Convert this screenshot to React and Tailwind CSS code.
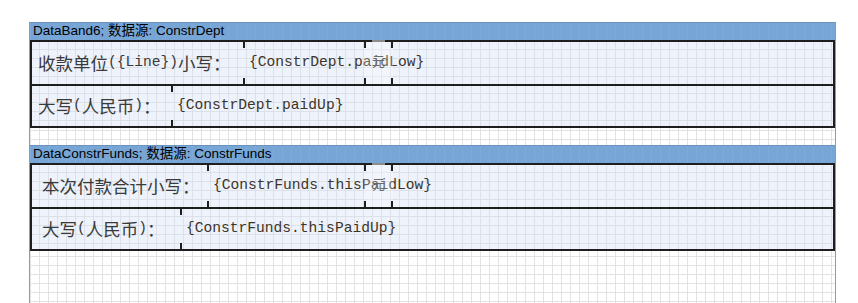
const pageGrid =
  'bg-white bg-[image:linear-gradient(to_right,#e3e3e3_1px,transparent_1px),linear-gradient(to_bottom,#e3e3e3_1px,transparent_1px)] bg-[size:9px_9px]';
const rowGrid =
  'bg-[#eef2fa] bg-[image:linear-gradient(to_right,#dbe0e9_1px,transparent_1px),linear-gradient(to_bottom,#dbe0e9_1px,transparent_1px)] bg-[size:9px_9px] bg-[position:-2px_-2px]';
const headGrid =
  'bg-[#77a6d6] bg-[image:linear-gradient(to_right,#7dabd9_1px,transparent_1px)] bg-[size:9px_9px]';

const cjk = { fontFamily: '"Noto Sans CJK SC", sans-serif' };
const mono = { fontFamily: '"Liberation Mono", "Noto Sans CJK SC", monospace' };

function Tick() {
  return (
    <div className="flex w-[2px] shrink-0 flex-col justify-between self-stretch">
      <div className="h-[6px] bg-[#1e1e1e]" />
      <div className="h-[6px] bg-[#1e1e1e]" />
    </div>
  );
}

// label made of CJK and half-width parts, like the designer's SimSun text
function Label({ parts, width, pad }) {
  return (
    <div className={`flex shrink-0 items-center whitespace-nowrap text-[#3a3a3a] ${width} ${pad}`}>
      {parts.map((p, i) =>
        p.m ? (
          <span key={i} className="text-[14.6px]" style={mono}>{p.t}</span>
        ) : (
          <span key={i} className="text-[17.5px] leading-none" style={cjk}>{p.t}</span>
        )
      )}
    </div>
  );
}

function YuanBox({ left }) {
  return (
    <div className={`absolute top-0 bottom-0 flex w-[29px] justify-between bg-white/25 ${left}`}>
      <Tick />
      <div className="flex flex-col items-center">
        <div className="-mt-[2px] h-[2px] w-[13px] bg-[#8c8c8c]" />
        <span className="mt-[12px] text-[13px] leading-none text-[#6a6a6a]" style={cjk}>元</span>
      </div>
      <Tick />
    </div>
  );
}

function Row({ label, labelW, pad, code, yuan, top }) {
  return (
    <div className={`relative flex h-[42px] ${rowGrid} ${top ? 'border-t-2 border-[#1e1e1e]' : ''}`}>
      <Label parts={label} width={labelW} pad={pad} />
      <Tick />
      <div className="flex items-center pl-[4px] text-[14.6px] whitespace-nowrap text-[#3d3428]" style={mono}>
        {code}
      </div>
      {yuan && <YuanBox left="left-[332px]" />}
    </div>
  );
}

function Band({ title, rows }) {
  return (
    <div className="flex flex-col">
      <div
        className={`flex h-[18px] items-center border-t border-[#6b93bd] pl-[3px] text-[13.5px] text-black ${headGrid}`}
        style={{ fontFamily: '"Liberation Sans", "Noto Sans CJK SC", sans-serif' }}
      >
        {title}
      </div>
      <div className="flex flex-col border-2 border-[#1e1e1e]">
        {rows.map((r, i) => (
          <Row key={i} {...r} top={i > 0} />
        ))}
      </div>
    </div>
  );
}

export default function App() {
  return (
    <div className="h-[303px] w-[858px] overflow-hidden bg-white pt-[22px]">
      <div className={`ml-[29px] flex h-[281px] w-[807px] flex-col gap-[17px] border-x border-[#9a9a9a] ${pageGrid}`}>
        <Band
          title="DataBand6; 数据源: ConstrDept"
          rows={[
            {
              label: [{ t: '收款单位' }, { t: '({Line})', m: true }, { t: '小写：' }],
              labelW: 'w-[211px]',
              pad: 'pl-[6px]',
              code: '{ConstrDept.paidLow}',
              yuan: true,
            },
            {
              label: [{ t: '大写' }, { t: '(', m: true }, { t: '人民币' }, { t: ')', m: true }, { t: '：' }],
              labelW: 'w-[139px]',
              pad: 'pl-[6px]',
              code: '{ConstrDept.paidUp}',
            },
          ]}
        />
        <Band
          title="DataConstrFunds; 数据源: ConstrFunds"
          rows={[
            {
              label: [{ t: '本次付款合计小写：' }],
              labelW: 'w-[175px]',
              pad: 'pl-[10px]',
              code: '{ConstrFunds.thisPaidLow}',
              yuan: true,
            },
            {
              label: [{ t: '大写' }, { t: '(', m: true }, { t: '人民币' }, { t: ')', m: true }, { t: '：' }],
              labelW: 'w-[148px]',
              pad: 'pl-[10px]',
              code: '{ConstrFunds.thisPaidUp}',
            },
          ]}
        />
      </div>
    </div>
  );
}
